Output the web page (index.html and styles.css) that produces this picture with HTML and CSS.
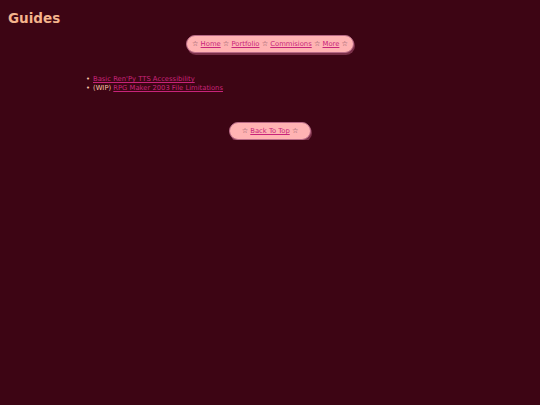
FILE: index.html
```html
<!DOCTYPE html>
<html>
<head>
<meta charset="utf-8">
<link rel="stylesheet" href="styles.css">
</head>
<body>
<h1 class="title">Guides</h1>
<nav class="navwrap">
  <div class="pill"><span class="star">☆</span> <a href="#">Home</a> <span class="star">☆</span> <a href="#">Portfolio</a> <span class="star">☆</span> <a href="#">Commisions</a> <span class="star">☆</span> <a href="#">More</a> <span class="star">☆</span></div>
</nav>
<ul class="guides">
  <li><a href="#">Basic Ren'Py TTS Accessibility</a></li>
  <li>(WIP) <a href="#">RPG Maker 2003 File Limitations</a></li>
</ul>
<div class="navwrap top">
  <div class="pill wide"><span class="star">☆</span> <a href="#">Back To Top</a> <span class="star">☆</span></div>
</div>
</body>
</html>
```
FILE: styles.css
```css
html, body {
  background: #3d0514;
}
body {
  margin: 8px;
  font-family: "DejaVu Sans", Verdana, sans-serif;
  font-size: 6.8px;
  color: #f7c3a8;
}
.title {
  font-size: 13.5px;
  font-weight: bold;
  color: #f4b48c;
  margin: 2px 0 0 0;
  line-height: 16px;
}
.navwrap {
  display: flex;
  justify-content: center;
  margin-top: 9px;
}
.pill {
  background: #ffb3b3;
  border: 1px solid #b86a86;
  border-radius: 9px;
  padding: 3px 5px;
  color: #7a4858;
  box-shadow: 1px 2px 0 #7a3048;
  line-height: 9px;
}
.pill.wide {
  padding: 3px 12px;
}
.star {
  font-size: 7.2px;
  color: #7a4858;
}
.pill a, .guides a {
  color: #c8247a;
}
.guides {
  list-style: none;
  margin: 22px 0 0 0;
  padding-left: 78px;
  line-height: 9px;
  color: #f7c3a8;
}
.guides li::before {
  content: "•";
  display: inline-block;
  width: 7px;
}
.top {
  margin-top: 29px;
}
```
